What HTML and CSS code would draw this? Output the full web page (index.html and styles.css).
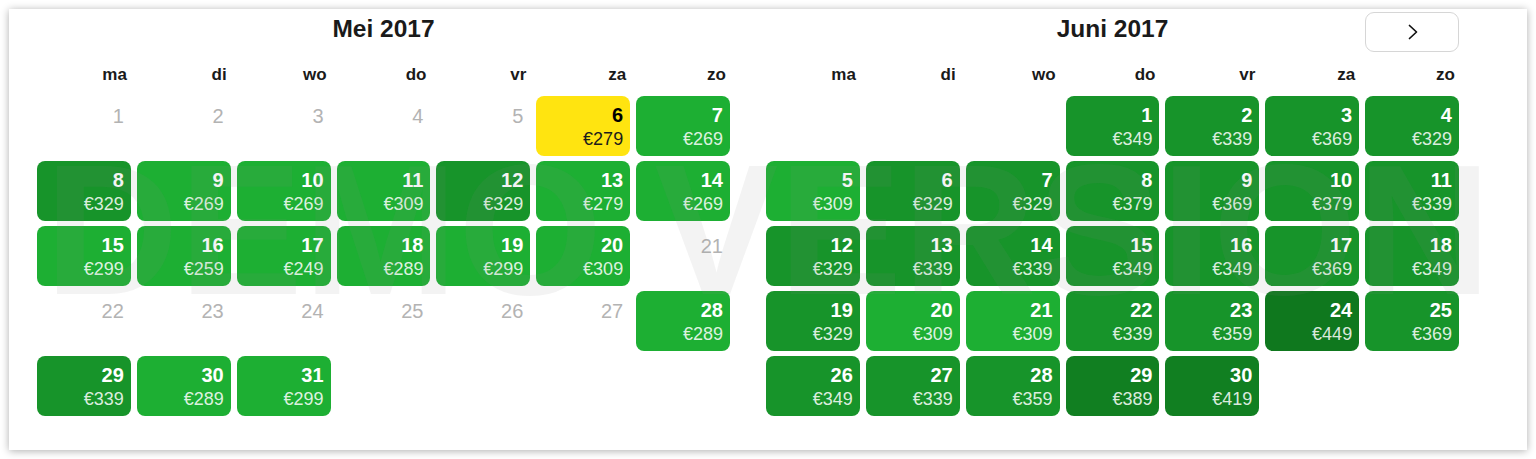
FILE: index.html
```html
<!DOCTYPE html>
<html lang="nl">
<head>
<meta charset="utf-8">
<title>Kalender</title>
<link rel="stylesheet" href="styles.css">
</head>
<body>
<div class="card">
  <div class="months">
    <section class="month">
      <header class="month-head">
        <span></span>
        <h2 class="month-title">Mei 2017</h2>
        <span></span>
      </header>
      <div class="weekdays">
        <div class="wd">ma</div><div class="wd">di</div><div class="wd">wo</div><div class="wd">do</div><div class="wd">vr</div><div class="wd">za</div><div class="wd">zo</div>
      </div>
      <div class="days">
        <div class="day off">1</div>
        <div class="day off">2</div>
        <div class="day off">3</div>
        <div class="day off">4</div>
        <div class="day off">5</div>
        <div class="day sel"><span class="num">6</span><span class="price">€279</span></div>
        <div class="day p1"><span class="num">7</span><span class="price">€269</span></div>

        <div class="day p2"><span class="num">8</span><span class="price">€329</span></div>
        <div class="day p1"><span class="num">9</span><span class="price">€269</span></div>
        <div class="day p1"><span class="num">10</span><span class="price">€269</span></div>
        <div class="day p1"><span class="num">11</span><span class="price">€309</span></div>
        <div class="day p2"><span class="num">12</span><span class="price">€329</span></div>
        <div class="day p1"><span class="num">13</span><span class="price">€279</span></div>
        <div class="day p1"><span class="num">14</span><span class="price">€269</span></div>

        <div class="day p1"><span class="num">15</span><span class="price">€299</span></div>
        <div class="day p1"><span class="num">16</span><span class="price">€259</span></div>
        <div class="day p1"><span class="num">17</span><span class="price">€249</span></div>
        <div class="day p1"><span class="num">18</span><span class="price">€289</span></div>
        <div class="day p1"><span class="num">19</span><span class="price">€299</span></div>
        <div class="day p1"><span class="num">20</span><span class="price">€309</span></div>
        <div class="day off">21</div>

        <div class="day off">22</div>
        <div class="day off">23</div>
        <div class="day off">24</div>
        <div class="day off">25</div>
        <div class="day off">26</div>
        <div class="day off">27</div>
        <div class="day p1"><span class="num">28</span><span class="price">€289</span></div>

        <div class="day p2"><span class="num">29</span><span class="price">€339</span></div>
        <div class="day p1"><span class="num">30</span><span class="price">€289</span></div>
        <div class="day p1"><span class="num">31</span><span class="price">€299</span></div>
      </div>
    </section>

    <section class="month">
      <header class="month-head">
        <span></span>
        <h2 class="month-title">Juni 2017</h2>
        <button class="next" type="button" aria-label="Volgende maand">
          <svg width="10" height="16" viewBox="0 0 10 16"><polyline points="1.5,1.5 8.5,8 1.5,14.5" fill="none" stroke="#111" stroke-width="1.7" stroke-linecap="round" stroke-linejoin="round"/></svg>
        </button>
      </header>
      <div class="weekdays">
        <div class="wd">ma</div><div class="wd">di</div><div class="wd">wo</div><div class="wd">do</div><div class="wd">vr</div><div class="wd">za</div><div class="wd">zo</div>
      </div>
      <div class="days">
        <div class="day empty"></div>
        <div class="day empty"></div>
        <div class="day empty"></div>
        <div class="day p2"><span class="num">1</span><span class="price">€349</span></div>
        <div class="day p2"><span class="num">2</span><span class="price">€339</span></div>
        <div class="day p2"><span class="num">3</span><span class="price">€369</span></div>
        <div class="day p2"><span class="num">4</span><span class="price">€329</span></div>

        <div class="day p1"><span class="num">5</span><span class="price">€309</span></div>
        <div class="day p2"><span class="num">6</span><span class="price">€329</span></div>
        <div class="day p2"><span class="num">7</span><span class="price">€329</span></div>
        <div class="day p2"><span class="num">8</span><span class="price">€379</span></div>
        <div class="day p2"><span class="num">9</span><span class="price">€369</span></div>
        <div class="day p2"><span class="num">10</span><span class="price">€379</span></div>
        <div class="day p2"><span class="num">11</span><span class="price">€339</span></div>

        <div class="day p2"><span class="num">12</span><span class="price">€329</span></div>
        <div class="day p2"><span class="num">13</span><span class="price">€339</span></div>
        <div class="day p2"><span class="num">14</span><span class="price">€339</span></div>
        <div class="day p2"><span class="num">15</span><span class="price">€349</span></div>
        <div class="day p2"><span class="num">16</span><span class="price">€349</span></div>
        <div class="day p2"><span class="num">17</span><span class="price">€369</span></div>
        <div class="day p2"><span class="num">18</span><span class="price">€349</span></div>

        <div class="day p2"><span class="num">19</span><span class="price">€329</span></div>
        <div class="day p1"><span class="num">20</span><span class="price">€309</span></div>
        <div class="day p1"><span class="num">21</span><span class="price">€309</span></div>
        <div class="day p2"><span class="num">22</span><span class="price">€339</span></div>
        <div class="day p2"><span class="num">23</span><span class="price">€359</span></div>
        <div class="day p4"><span class="num">24</span><span class="price">€449</span></div>
        <div class="day p2"><span class="num">25</span><span class="price">€369</span></div>

        <div class="day p2"><span class="num">26</span><span class="price">€349</span></div>
        <div class="day p2"><span class="num">27</span><span class="price">€339</span></div>
        <div class="day p2"><span class="num">28</span><span class="price">€359</span></div>
        <div class="day p3"><span class="num">29</span><span class="price">€389</span></div>
        <div class="day p3"><span class="num">30</span><span class="price">€419</span></div>
      </div>
    </section>
  </div>
  <div class="watermark">DEMO VERSION</div>
</div>
</body>
</html>
```

FILE: styles.css
```css
* {
  box-sizing: border-box;
}

html, body {
  margin: 0;
  background: #ffffff;
}

body {
  padding: 9px;
  font-family: "Liberation Sans", Arial, sans-serif;
  color: #1a1a1a;
}

.card {
  position: relative;
  overflow: hidden;
  background: #ffffff;
  box-shadow: 0 1px 8px rgba(0, 0, 0, 0.32);
  padding: 3px 68px 34px 28px;
}

.months {
  display: grid;
  grid-template-columns: 1fr 1fr;
  column-gap: 36px;
}

.month-head {
  display: grid;
  grid-template-columns: 1fr auto 1fr;
  align-items: start;
  height: 40px;
}

.month-title {
  margin: 3px 0 0;
  font-size: 24.5px;
  line-height: 28px;
  font-weight: 700;
  color: #1a1a1a;
  text-align: center;
}

.next {
  justify-self: end;
  width: 94px;
  height: 40px;
  padding: 0;
  border: 1px solid #d6d6d6;
  border-radius: 9px;
  background: #ffffff;
  display: flex;
  align-items: center;
  justify-content: center;
}

.next svg {
  display: block;
  margin-left: 2px;
}

.weekdays {
  display: grid;
  grid-template-columns: repeat(7, 1fr);
  column-gap: 6px;
  margin-top: 13px;
}

.wd {
  text-align: right;
  padding-right: 4px;
  font-size: 17px;
  line-height: 20px;
  font-weight: 700;
  color: #1a1a1a;
}

.days {
  display: grid;
  grid-template-columns: repeat(7, 1fr);
  grid-auto-rows: 60px;
  column-gap: 6px;
  row-gap: 5px;
  margin-top: 11px;
}

.day {
  border-radius: 8px;
  display: flex;
  flex-direction: column;
  align-items: flex-end;
  padding: 8px 7px 0 0;
}

.day.off {
  padding-top: 9px;
  font-size: 20px;
  line-height: 22px;
  color: #b3b3b3;
}

.num {
  font-size: 20px;
  line-height: 22px;
  font-weight: 700;
  color: #ffffff;
}

.price {
  margin-top: 2px;
  font-size: 18px;
  line-height: 22px;
  color: rgba(255, 255, 255, 0.86);
}

.sel {
  background: #ffe410;
}

.sel .num {
  color: #000000;
}

.sel .price {
  color: #1c1c1c;
}

.p1 {
  background: #1daf33;
}

.p2 {
  background: #17942a;
}

.p3 {
  background: #117f21;
}

.p4 {
  background: #0f781e;
}

.watermark {
  position: absolute;
  inset: 0;
  display: flex;
  align-items: center;
  justify-content: center;
  font-size: 186px;
  line-height: 1;
  font-weight: 700;
  white-space: nowrap;
  color: rgba(140, 140, 140, 0.1);
  pointer-events: none;
}
```
